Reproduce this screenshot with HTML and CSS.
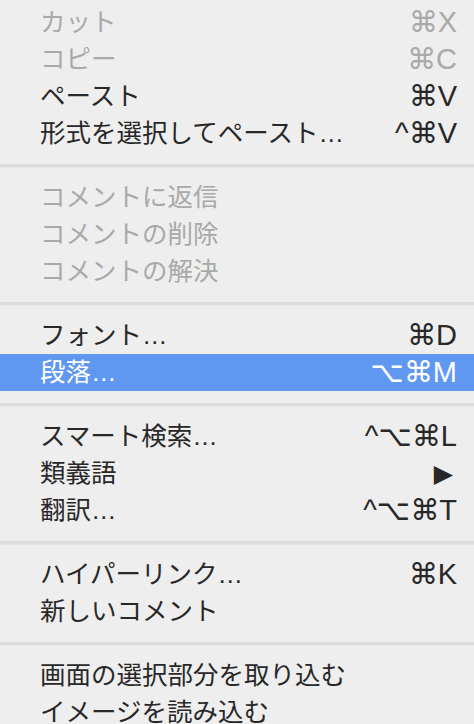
FILE: index.html
```html
<!DOCTYPE html>
<html lang="ja">
<head>
<meta charset="utf-8">
<link rel="stylesheet" href="styles.css">
</head>
<body>
<div class="menu">
  <div class="group">
    <div class="item disabled"><span class="label">カット</span><span class="key">⌘X</span></div>
    <div class="item disabled"><span class="label">コピー</span><span class="key">⌘C</span></div>
    <div class="item"><span class="label">ペースト</span><span class="key">⌘V</span></div>
    <div class="item"><span class="label">形式を選択してペースト…</span><span class="key">^⌘V</span></div>
  </div>
  <div class="sep"></div>
  <div class="group">
    <div class="item disabled"><span class="label">コメントに返信</span></div>
    <div class="item disabled"><span class="label">コメントの削除</span></div>
    <div class="item disabled"><span class="label">コメントの解決</span></div>
  </div>
  <div class="sep"></div>
  <div class="group">
    <div class="item"><span class="label">フォント…</span><span class="key">⌘D</span></div>
    <div class="item active"><span class="label">段落…</span><span class="key">⌥⌘M</span></div>
  </div>
  <div class="sep"></div>
  <div class="group">
    <div class="item"><span class="label">スマート検索…</span><span class="key">^⌥⌘L</span></div>
    <div class="item"><span class="label">類義語</span><span class="key arrow">▶</span></div>
    <div class="item"><span class="label">翻訳…</span><span class="key">^⌥⌘T</span></div>
  </div>
  <div class="sep"></div>
  <div class="group">
    <div class="item"><span class="label">ハイパーリンク…</span><span class="key">⌘K</span></div>
    <div class="item"><span class="label">新しいコメント</span></div>
  </div>
  <div class="sep"></div>
  <div class="group">
    <div class="item"><span class="label">画面の選択部分を取り込む</span></div>
    <div class="item"><span class="label">イメージを読み込む</span></div>
  </div>
</div>
</body>
</html>
```
FILE: styles.css
```css
html, body {
  margin: 0;
  padding: 0;
  background: #eeeeee;
}
body {
  width: 474px;
  height: 724px;
  overflow: hidden;
}
.menu {
  padding-top: 4px;
  display: flex;
  flex-direction: column;
  color: #282828;
}
.item {
  height: 37px;
  display: flex;
  align-items: center;
  justify-content: space-between;
  padding: 0 17px 0 40px;
}
.label {
  font-family: "Liberation Sans", "Noto Sans CJK JP", sans-serif;
  font-size: 25.5px;
  line-height: 1;
  white-space: nowrap;
}
.key {
  font-family: "Liberation Sans", "DejaVu Sans", sans-serif;
  font-size: 29px;
  line-height: 1;
  white-space: nowrap;
}
.key.arrow {
  font-family: "DejaVu Sans", sans-serif;
  font-size: 25px;
  padding-right: 4px;
}
.disabled {
  color: #a9a9a9;
}
.active {
  background: #5f97f1;
  color: #ffffff;
}
.sep {
  height: 27px;
  display: flex;
  flex-direction: column;
  justify-content: center;
}
.sep::before {
  content: "";
  display: block;
  height: 3px;
  background: #dcdcdc;
  border-bottom: 1px solid #e6e6e6;
}
```
